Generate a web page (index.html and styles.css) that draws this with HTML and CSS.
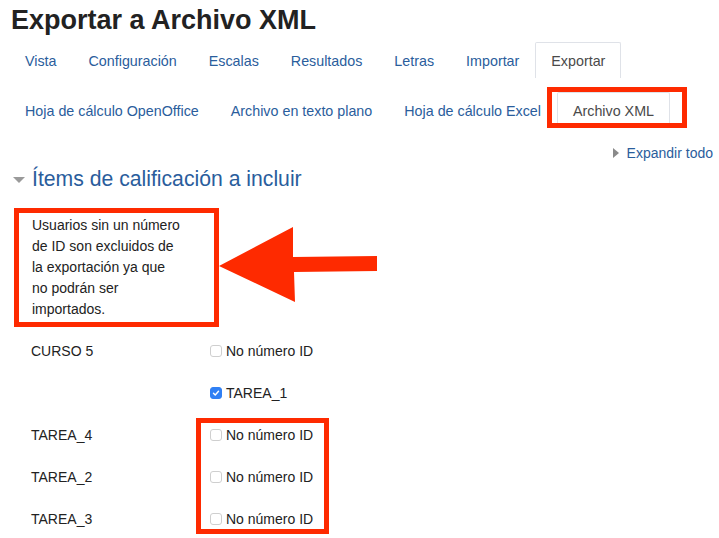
FILE: index.html
```html
<!DOCTYPE html>
<html lang="es">
<head>
<meta charset="utf-8">
<title>Exportar a Archivo XML</title>
<link rel="stylesheet" href="styles.css">
</head>
<body>
<div class="page">
  <h1 class="title">Exportar a Archivo XML</h1>

  <nav class="tabs primary">
    <a class="tab" href="#">Vista</a>
    <a class="tab" href="#">Configuración</a>
    <a class="tab" href="#">Escalas</a>
    <a class="tab" href="#">Resultados</a>
    <a class="tab" href="#">Letras</a>
    <a class="tab" href="#">Importar</a>
    <span class="tab active">Exportar</span>
  </nav>

  <nav class="tabs secondary">
    <a class="tab" href="#">Hoja de cálculo OpenOffice</a>
    <a class="tab" href="#">Archivo en texto plano</a>
    <a class="tab" href="#">Hoja de cálculo Excel</a>
    <span class="tab active">Archivo XML</span>
  </nav>

  <div class="expand-row">
    <a class="expand" href="#"><span class="tri-right"></span>Expandir todo</a>
  </div>

  <h3 class="section"><span class="tri-down"></span>Ítems de calificación a incluir</h3>

  <div class="notice">Usuarios sin un número<br>de ID son excluidos de<br>la exportación ya que<br>no podrán ser<br>importados.</div>

  <div class="rows">
    <div class="row">
      <span class="label">CURSO 5</span>
      <label class="check"><span class="box"></span>No número ID</label>
    </div>
    <div class="row">
      <span class="label"></span>
      <label class="check"><span class="box checked"><svg viewBox="0 0 12 12" width="12" height="12"><path d="M3 6.2 L5.1 8.3 L9 3.8" fill="none" stroke="#fff" stroke-width="1.7" stroke-linecap="round" stroke-linejoin="round"/></svg></span>TAREA_1</label>
    </div>
    <div class="row">
      <span class="label">TAREA_4</span>
      <label class="check"><span class="box"></span>No número ID</label>
    </div>
    <div class="row">
      <span class="label">TAREA_2</span>
      <label class="check"><span class="box"></span>No número ID</label>
    </div>
    <div class="row">
      <span class="label">TAREA_3</span>
      <label class="check"><span class="box"></span>No número ID</label>
    </div>
  </div>

  <div class="mark mark-tab"></div>
  <div class="mark mark-checks"></div>
  <svg class="arrow" viewBox="215 222 166 84" width="166" height="84">
    <polygon points="219,266 293,227 293,257 377,256 377,271 294,272 295,302" fill="#fe2a00"/>
  </svg>
</div>
</body>
</html>
```

FILE: styles.css
```css
* { box-sizing: border-box; }

html, body {
  margin: 0;
  padding: 0;
  background: #fff;
}

body {
  font-family: "Liberation Sans", Arial, "Helvetica Neue", sans-serif;
  font-size: 14px;
  line-height: 20px;
  color: #222;
}

.page {
  position: relative;
  width: 719px;
  height: 538px;
  overflow: hidden;
  padding-left: 9px;
}

a { color: #2a5d9c; text-decoration: none; }

.title {
  margin: 3px 0 0 2px;
  font-size: 27px;
  line-height: 34px;
  font-weight: 700;
  color: #222;
}

.tabs {
  display: flex;
  align-items: flex-end;
  font-size: 14.3px;
}

.tabs.primary { margin-top: 5px; }
.tabs.secondary { margin-top: 14px; }

.tab {
  display: block;
  padding: 8px 15px 7px;
  line-height: 20px;
  border: 1px solid transparent;
  border-bottom: 0;
  border-radius: 2px 2px 0 0;
  white-space: nowrap;
}

.tab.active {
  color: #4a4a4a;
  border-color: #dfe2e8;
  background: #fff;
}

.expand-row {
  margin-top: 15px;
  display: flex;
  justify-content: flex-end;
  padding-right: 6px;
}

.expand {
  display: flex;
  align-items: center;
}

.tri-right {
  width: 0;
  height: 0;
  border-top: 5.5px solid transparent;
  border-bottom: 5.5px solid transparent;
  border-left: 6px solid #8a8a8a;
  margin-right: 8px;
}

.section {
  margin: 4px 0 0;
  display: flex;
  align-items: center;
  font-size: 21.2px;
  line-height: 24px;
  font-weight: 400;
  color: #2a5d9c;
}

.tri-down {
  width: 0;
  height: 0;
  border-left: 6px solid transparent;
  border-right: 6px solid transparent;
  border-top: 6px solid #9a9a9a;
  margin: 2px 7px 0 4px;
}

.notice {
  margin: 17px 0 0 5px;
  width: 205px;
  height: 119px;
  border: 5px solid #fe2a00;
  padding: 2px 0 2px 13px;
  line-height: 21px;
  color: #222;
}

.rows {
  margin: 3px 0 0 22px;
}

.row {
  display: grid;
  grid-template-columns: 179px auto;
  align-items: center;
  height: 42px;
  padding: 11px 0;
}

.check {
  display: flex;
  align-items: center;
  color: #222;
}

.box {
  width: 12px;
  height: 12px;
  border: 1px solid #cfcfcf;
  border-radius: 3px;
  background: #fff;
  margin-right: 4px;
  display: flex;
  align-items: center;
  justify-content: center;
}

.box.checked {
  border-color: #3080f4;
  background: #3080f4;
}

.box.checked svg { display: block; }

.mark {
  position: absolute;
  border: 5px solid #fe2a00;
}

.mark-tab {
  left: 547px;
  top: 87px;
  width: 140px;
  height: 41px;
}

.mark-checks {
  left: 196px;
  top: 418px;
  width: 133px;
  height: 116px;
}

.arrow {
  position: absolute;
  left: 215px;
  top: 222px;
}
```
